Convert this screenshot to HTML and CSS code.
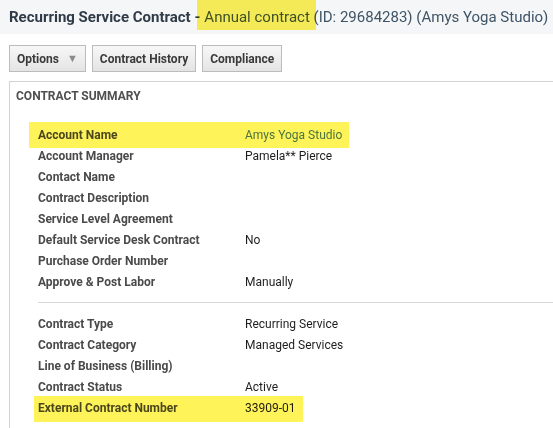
FILE: index.html
```html
<!DOCTYPE html>
<html lang="en">
<head>
  <meta charset="UTF-8">
  <title>Recurring Service Contract</title>
  <link rel="stylesheet" href="styles.css">
</head>
<body>
  <div class="page">
    <div class="title-bar">
      <span class="title-main">Recurring Service Contract -</span>
      <span class="title-sub">Annual contract (ID: 29684283) (Amys Yoga Studio)</span>
    </div>

    <div class="toolbar">
      <button class="btn">Options <span class="caret">&#9660;</span></button>
      <button class="btn">Contract History</button>
      <button class="btn">Compliance</button>
    </div>

    <div class="panel">
      <div class="panel-title">CONTRACT SUMMARY</div>

      <div class="group">
        <div class="row"><span class="label">Account Name</span><span class="value link">Amys Yoga Studio</span></div>
        <div class="row"><span class="label">Account Manager</span><span class="value">Pamela** Pierce</span></div>
        <div class="row"><span class="label">Contact Name</span><span class="value"></span></div>
        <div class="row"><span class="label">Contract Description</span><span class="value"></span></div>
        <div class="row"><span class="label">Service Level Agreement</span><span class="value"></span></div>
        <div class="row"><span class="label">Default Service Desk Contract</span><span class="value">No</span></div>
        <div class="row"><span class="label">Purchase Order Number</span><span class="value"></span></div>
        <div class="row"><span class="label">Approve &amp; Post Labor</span><span class="value">Manually</span></div>
      </div>

      <div class="divider"></div>

      <div class="group">
        <div class="row"><span class="label">Contract Type</span><span class="value">Recurring Service</span></div>
        <div class="row"><span class="label">Contract Category</span><span class="value">Managed Services</span></div>
        <div class="row"><span class="label">Line of Business (Billing)</span><span class="value"></span></div>
        <div class="row"><span class="label">Contract Status</span><span class="value">Active</span></div>
        <div class="row"><span class="label">External Contract Number</span><span class="value">33909-01</span></div>
      </div>
    </div>

    <!-- annotation marks laid over the page -->
    <div class="mark mark-title"></div>
    <div class="mark mark-account"></div>
    <div class="mark mark-external"></div>
  </div>
</body>
</html>
```

FILE: styles.css
```css
body {
  margin: 0;
  font-family: Roboto, "Liberation Sans", Arial, sans-serif;
  background: #fff;
  color: #222;
  overflow: hidden;
}
.page {
  position: relative;
  width: 553px;
  height: 428px;
  display: flex;
  flex-direction: column;
  overflow: hidden;
}
.title-bar {
  background: #f4f6f8;
  height: 34px;
  flex-shrink: 0;
  padding: 0 9px;
  display: flex;
  align-items: center;
  gap: 4px;
  font-size: 15px;
  white-space: nowrap;
}
.title-main {
  font-weight: bold;
  color: #2f3b46;
}
.title-sub {
  color: #3f5466;
}
.toolbar {
  display: flex;
  gap: 6px;
  padding: 11px 9px 0;
}
.btn {
  font-family: Roboto, "Liberation Sans", Arial, sans-serif;
  font-size: 12px;
  font-weight: bold;
  color: #3a3a3a;
  height: 27px;
  padding: 0 7px;
  border: 1px solid #bcbcbc;
  background: linear-gradient(#f7f7f7, #e4e4e4);
  display: flex;
  align-items: center;
}
.caret {
  font-size: 11px;
  color: #8a8a8a;
  margin-left: 8px;
}
.panel {
  flex: 1;
  margin: 9px 0 0 9px;
  border-top: 1px solid #d3d3d3;
  border-left: 1px solid #d3d3d3;
  padding: 7px 0 0 6px;
}
.panel-title {
  font-size: 12px;
  font-weight: bold;
  color: #4f4f4f;
  margin-bottom: 21px;
}
.group {
  padding-left: 22px;
}
.row {
  display: flex;
  height: 21px;
  align-items: center;
  font-size: 12px;
}
.label {
  width: 207px;
  font-weight: bold;
  color: #4a4a4a;
}
.value {
  color: #1e1e1e;
}
.value.link {
  color: #4b7ba6;
}
.divider {
  margin: 10px 0 10px 22px;
  border-top: 1px solid #d6d6d6;
}
.mark {
  position: absolute;
  background: #fff35a;
  mix-blend-mode: multiply;
}
.mark-title {
  left: 197px;
  top: 0;
  width: 119px;
  height: 30px;
}
.mark-account {
  left: 29px;
  top: 122px;
  width: 320px;
  height: 26px;
}
.mark-external {
  left: 34px;
  top: 396px;
  width: 269px;
  height: 26px;
}
```
